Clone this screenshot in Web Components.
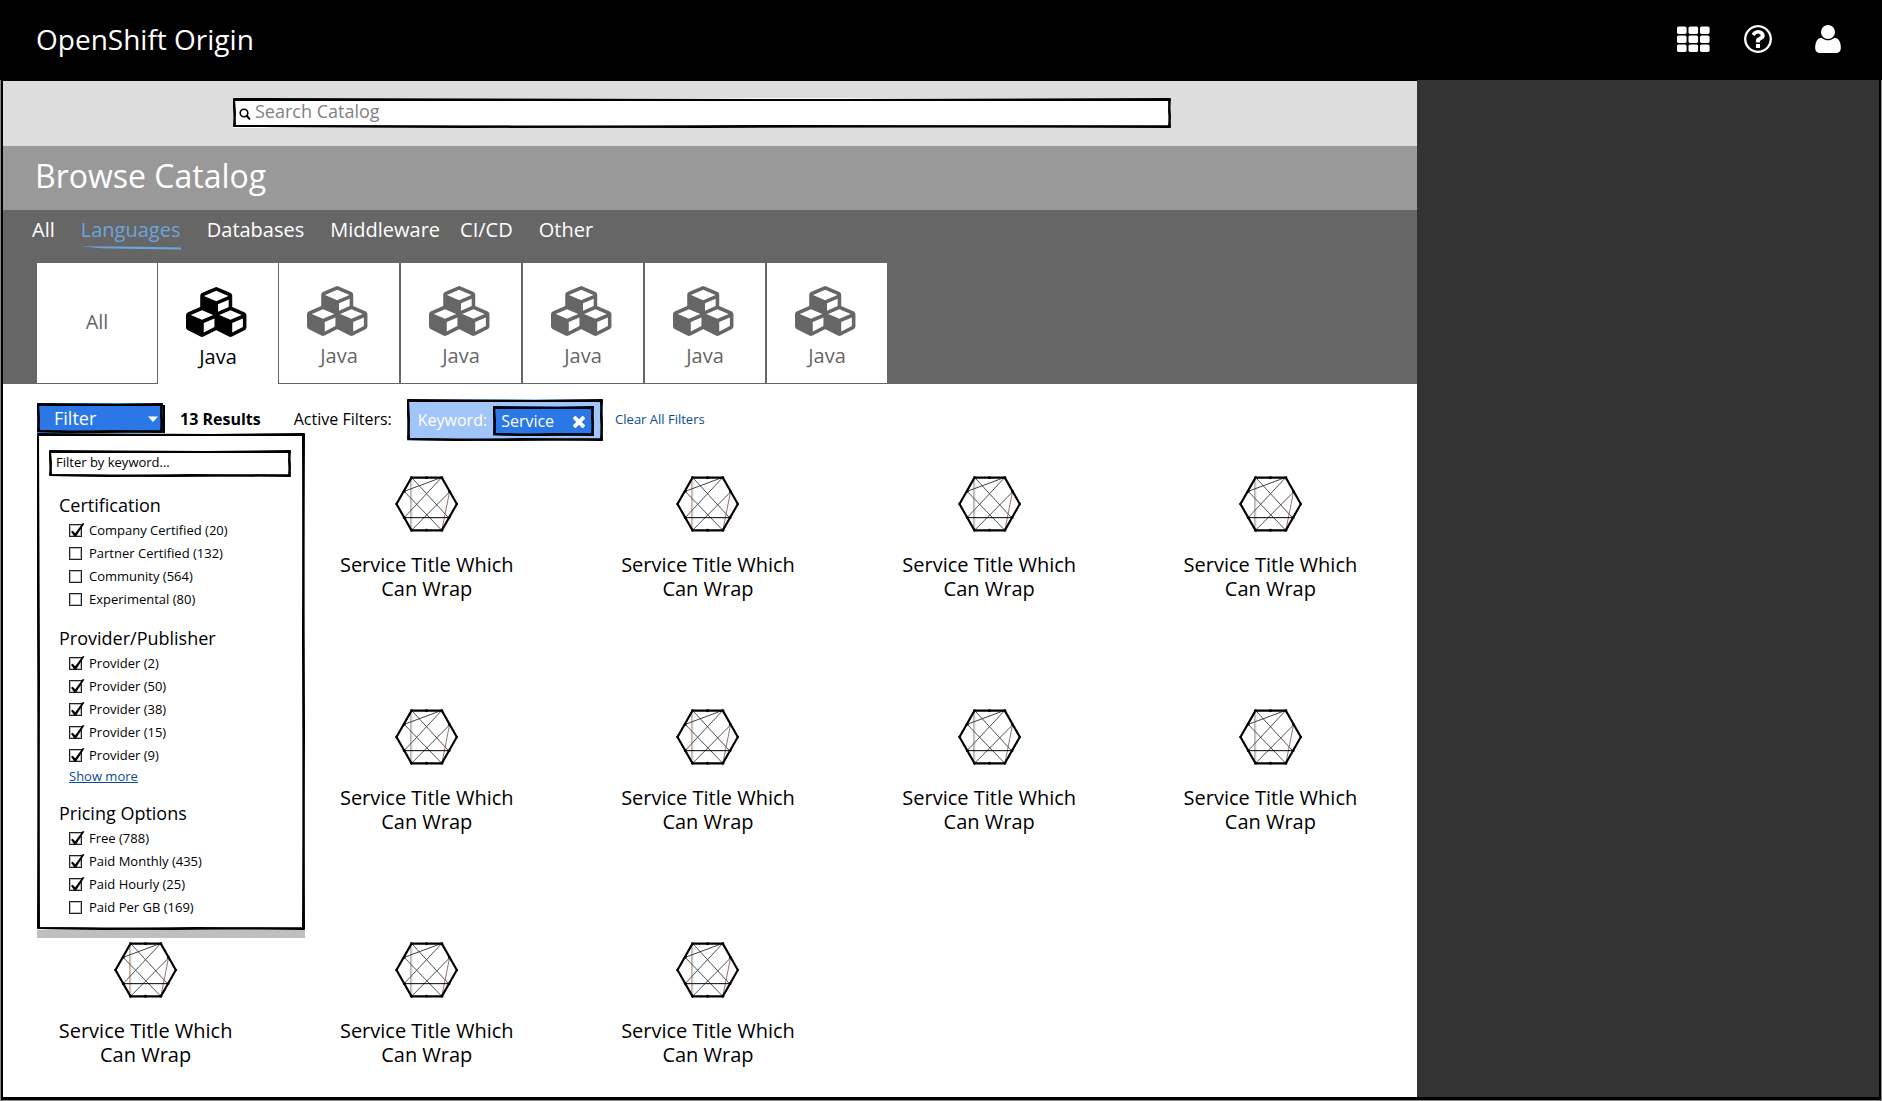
<!DOCTYPE html>
<html lang="en">
<head>
<meta charset="utf-8">
<title>OpenShift Origin</title>
<style>
html, body { margin: 0; min-height: 100vh; }
body { font-family: "Open Sans", "Noto Sans", sans-serif; color: #000; background: #fff; }
</style>
</head>
<body>
<catalog-app></catalog-app>

<script>
const define = (name, html, setup) => {
  const template = document.createElement('template');
  template.innerHTML = html;
  customElements.define(name, class extends HTMLElement {
    constructor() {
      super();
      this.attachShadow({ mode: 'open' }).append(template.content.cloneNode(true));
    }
    connectedCallback() { if (setup) setup(this, this.shadowRoot); }
  });
};

/* Icons share one glyph sheet: viewBox and drawing for each name. */
const up = d => `<path transform="scale(1,-1)" d="${d}"/>`;
const cell = [];
for (const y of [0.5, 9.5, 18.5]) for (const x of [0, 11.5, 23]) cell.push(`<rect x="${x}" y="${y}" width="9.6" height="7.4" rx="1.6"/>`);
const ICONS = {
  grid: ['0 0 33 26', cell.join('')],
  help: ['0 -1408 1536 1536', up('M880 336v-160q0 -14 -9 -23t-23 -9h-160q-14 0 -23 9t-9 23v160q0 14 9 23t23 9h160q14 0 23 -9t9 -23zM1136 832q0 -50 -15 -90t-45.5 -69t-52 -44t-59.5 -36q-32 -18 -46.5 -28t-26 -24t-11.5 -29v-32q0 -14 -9 -23t-23 -9h-160q-14 0 -23 9t-9 23v68q0 35 10.5 64.5t24 47.5t39 35.5t41 25.5t44.5 21q53 25 75 43t22 49q0 42 -43.5 71.5t-95.5 29.5q-56 0 -95 -27q-29 -20 -80 -83q-9 -12 -25 -12q-11 0 -19 6l-108 82q-10 7 -12 20t5 23q122 192 349 192q129 0 238.5 -89.5t109.5 -214.5zM768 1280q-130 0 -248.5 -51t-204 -136.5t-136.5 -204t-51 -248.5t51 -248.5t136.5 -204t204 -136.5t248.5 -51t248.5 51t204 136.5t136.5 204t51 248.5t-51 248.5t-136.5 204t-204 136.5t-248.5 51zM1536 640q0 -209 -103 -385.5t-279.5 -279.5t-385.5 -103t-385.5 103t-279.5 279.5t-103 385.5t103 385.5t279.5 279.5t385.5 103t385.5 -103t279.5 -279.5t103 -385.5z')],
  user: ['0 -1408 1408 1536', up('M1408 131q0 -120 -73 -189.5t-194 -69.5h-874q-121 0 -194 69.5t-73 189.5q0 53 3.5 103.5t14 109t26.5 108.5t43 97.5t62 81t85.5 53.5t111.5 20q9 0 42 -21.5t74.5 -48t108 -48t133.5 -21.5t133.5 21.5t108 48t74.5 48t42 21.5q61 0 111.5 -20t85.5 -53.5t62 -81t43 -97.5t26.5 -108.5t14 -109t3.5 -103.5zM1088 1024q0 -159 -112.5 -271.5t-271.5 -112.5t-271.5 112.5t-112.5 271.5t112.5 271.5t271.5 112.5t271.5 -112.5t112.5 -271.5z')],
  cubes: ['0 -1536 2304 1792', up('M640 -96l384 192v314l-384 -164v-342zM576 358l404 173l-404 173l-404 -173zM1664 -96l384 192v314l-384 -164v-342zM1600 358l404 173l-404 173l-404 -173zM1152 651l384 165v266l-384 -164v-267zM1088 1030l441 189l-441 189l-441 -189zM2176 512v-416q0 -36 -19 -67t-52 -47l-448 -224q-25 -14 -57 -14t-57 14l-448 224q-4 2 -7 4q-2 -2 -7 -4l-448 -224q-25 -14 -57 -14t-57 14l-448 224q-33 16 -52 47t-19 67v416q0 38 21.5 70t56.5 48l434 186v400q0 38 21.5 70t56.5 48l448 192q23 10 50 10t50 -10l448 -192q35 -16 56.5 -48t21.5 -70v-400l434 -186q36 -16 57 -48t21 -70z')],
  close: ['110 -1170 1188 1188', up('M1298 214q0 -40 -28 -68l-136 -136q-28 -28 -68 -28t-68 28l-294 294l-294 -294q-28 -28 -68 -28t-68 28l-136 136q-28 28 -28 68t28 68l294 294l-294 294q-28 28 -28 68t28 68l136 136q28 28 68 28t68 -28l294 -294l294 294q28 28 68 28t68 -28l136 -136q28 -28 28 -68t-28 -68l-294 -294l294 -294q28 -28 28 -68z')],
  search: ['0 0 12 12', '<circle cx="5" cy="5" r="3.8" fill="none" stroke="currentColor" stroke-width="1.6"/><path d="M8 8L10.4 10.8" fill="none" stroke="currentColor" stroke-width="2" stroke-linecap="round"/>'],
  caret: ['0 0 10 6', '<path d="M0 0.5h10L5 6z"/>'],
  mesh: ['-3 -4 188 168', `
    <g fill="none" stroke-width="3">
      <path stroke="#c98a55" d="M44 2V158"/><path stroke="#8fc0e6" stroke-width="2" d="M47 2V158"/>
      <path stroke="#444" stroke-width="2.8" d="M46 0L157 121M137 0L24 121M24 42L137 159M160 44L46 159"/>
      <path stroke="#333" stroke-width="2.8" d="M24 42L137 0"/>
      <path stroke="#8a6a5a" stroke-width="2.8" d="M160 44L137 159"/>
      <path stroke="#000" d="M24 121H157"/>
      <path stroke="#000" stroke-width="6.4" d="M46 1H137L182 80L137 159H46L1 80Z"/>
    </g>
    <circle cx="1" cy="80" r="3.8"/><circle cx="182" cy="80" r="3.8"/><circle cx="46" cy="1" r="4.4"/><circle cx="137" cy="1" r="4.4"/>
    <circle cx="46" cy="159" r="4.4"/><circle cx="137" cy="159" r="4.4"/><circle cx="91" cy="1" r="4.4"/><circle cx="91" cy="159" r="4.4"/>
    <circle cx="24" cy="42" r="4"/><circle cx="24" cy="121" r="4"/><circle cx="160" cy="43" r="4"/><circle cx="159" cy="121" r="4"/>`]
};
define('app-icon', `
<style>
:host { display: block; flex: none; }
svg { display: block; width: 100%; height: 100%; fill: currentColor; }
</style>
<svg aria-hidden="true"></svg>`, (el, root) => {
  const [box, art] = ICONS[el.getAttribute('name')];
  const svg = root.querySelector('svg');
  svg.setAttribute('viewBox', box);
  svg.innerHTML = art;
});

/* A box with a hand-drawn outline that follows its own size. */
define('sketch-frame', `
<style>
:host { display: block; position: relative; box-sizing: border-box; }
svg { position: absolute; inset: 0; width: 100%; height: 100%; overflow: visible; pointer-events: none; }
path { fill: none; stroke: #000; stroke-width: 2; stroke-linejoin: round; }
</style>
<slot></slot>
<svg aria-hidden="true"><path/><path/></svg>`, (el, root) => {
  const [first, second] = root.querySelectorAll('path');
  const draw = () => {
    const w = el.offsetWidth, h = el.offsetHeight;
    first.setAttribute('d', `M1 1L${w * .3} 1.5L${w * .65} 2L${w - 1} 1L${w - 2} ${h * .4}L${w - 1} ${h - 1}L${w * .6} ${h - 2}L${w * .25} ${h - 1}L1 ${h - 2}L2 ${h * .5}Z`);
    second.setAttribute('d', `M1 2L${w * .45} 2L${w - 2} 2L${w - 1} ${h * .6}L${w - 2} ${h - 2}L${w * .5} ${h - 1}L2 ${h - 2}L1 ${h * .3}Z`);
  };
  new ResizeObserver(draw).observe(el);
  draw();
});

define('app-header', `
<style>
:host { display: flex; align-items: center; justify-content: space-between; height: 78px; padding: 0 41px 2px 36px; background: #000; color: #fff; }
h1 { margin: 0; font-size: 28px; line-height: 38px; font-weight: 400; }
nav { display: flex; align-items: center; }
button { display: block; padding: 0; border: 0; background: none; color: inherit; }
.grid { width: 33px; height: 26px; margin-right: 34px; }
.help { width: 28px; height: 28px; margin-right: 43px; }
.user { width: 26px; height: 28px; }
</style>
<h1>OpenShift Origin</h1>
<nav aria-label="Account">
  <button aria-label="Applications"><app-icon class="grid" name="grid"></app-icon></button>
  <button aria-label="Help"><app-icon class="help" name="help"></app-icon></button>
  <button aria-label="User"><app-icon class="user" name="user"></app-icon></button>
</nav>`);

define('catalog-search', `
<style>
:host { display: block; padding: 17px 246px 18px 230px; background: #ddd; }
sketch-frame { display: flex; align-items: center; gap: 4px; height: 30px; padding: 0 8px 0 6px; background: #fff; }
app-icon { width: 12px; height: 12px; margin-top: 2px; }
input { flex: 1; min-width: 0; height: 26px; padding: 0 0 4px; border: 0; outline: 0; background: none; box-sizing: border-box; font: 18px "Open Sans", sans-serif; }
input::placeholder { color: #7f7f88; opacity: 1; }
</style>
<sketch-frame><app-icon name="search"></app-icon><input type="search" placeholder="Search Catalog" aria-label="Search Catalog"></sketch-frame>`);

define('category-link', `
<style>
:host { display: block; }
a { display: block; color: #fff; text-decoration: none; font-size: 20px; line-height: 24px; padding-bottom: 8px; }
svg { display: none; width: 100%; height: 4px; }
:host([current]) a { color: #6ca5dc; padding-bottom: 4px; }
:host([current]) svg { display: block; }
</style>
<a href="#"><slot></slot></a>
<svg viewBox="0 0 100 4" preserveAspectRatio="none" aria-hidden="true"><path d="M0 .3L60 .8L100 1.6L100 3.4L60 3L20 2.2Z" fill="#6ca5dc"/></svg>`);

define('language-tile', `
<style>
:host { display: block; width: 120px; height: 120px; }
button { display: flex; flex-direction: column; align-items: center; justify-content: center; gap: 8px; width: 100%; height: 100%; padding: 0 0 2px; border: 0; background: #fff; color: #666; font: 20px/24px "Open Sans", sans-serif; }
:host([current]) button { color: #000; }
app-icon { width: 64px; height: 50px; margin-top: 10px; }
</style>
<button><slot></slot></button>`, (el, root) => {
  if (el.hasAttribute('icon') && !root.querySelector('app-icon')) {
    const icon = document.createElement('app-icon');
    icon.setAttribute('name', el.getAttribute('icon'));
    root.querySelector('button').prepend(icon);
  }
});

define('catalog-nav', `
<style>
:host { display: block; background: #666; }
h2 { margin: 0; padding: 9px 32px 13px; background: #999; color: #fff; font-size: 32px; line-height: 42px; font-weight: 400; }
nav { display: flex; gap: 26px; padding: 8px 29px 13px; }
nav .wide { margin-left: -6px; }
.tiles { display: flex; padding: 0 34px; gap: 2px; border-bottom: 1px solid #666; }
.joined { margin-right: -1px; }
.open { height: 121px; margin-right: -1px; margin-bottom: -1px; }
</style>
<h2>Browse Catalog</h2>
<nav aria-label="Categories">
  <category-link>All</category-link>
  <category-link current>Languages</category-link>
  <category-link>Databases</category-link>
  <category-link>Middleware</category-link>
  <category-link class="wide">CI/CD</category-link>
  <category-link>Other</category-link>
</nav>
<div class="tiles">
  <language-tile class="joined">All</language-tile>
  <language-tile class="open" icon="cubes" current>Java</language-tile>
  <language-tile icon="cubes">Java</language-tile>
  <language-tile icon="cubes">Java</language-tile>
  <language-tile icon="cubes">Java</language-tile>
  <language-tile icon="cubes">Java</language-tile>
  <language-tile icon="cubes">Java</language-tile>
</div>`);

define('filter-option', `
<style>
:host { display: block; }
label { display: flex; align-items: center; gap: 7px; height: 23px; font-size: 13px; line-height: 18px; }
span { padding-bottom: 2px; }
input { appearance: none; position: relative; flex: none; width: 13px; height: 13px; margin: 0; border: 1px solid #222; box-shadow: inset 0 0 0 1px #bbb; background: #fff; }
input:checked::after { content: ""; position: absolute; left: 1px; top: -2px; width: 14px; height: 14px; background: #000; clip-path: polygon(0 62%, 12% 55%, 30% 74%, 84% 0, 96% 4%, 36% 96%, 24% 96%); }
</style>
<label><input type="checkbox"><span><slot></slot></span></label>`, (el, root) => {
  root.querySelector('input').checked = el.hasAttribute('checked');
});

define('filter-group', `
<style>
:host { display: block; }
fieldset { margin: 0; padding: 0; border: 0; min-width: 0; }
legend { padding: 0 0 2px; font-size: 18px; line-height: 24px; }
.options { padding-left: 10px; }
</style>
<fieldset><legend></legend><div class="options"><slot></slot></div></fieldset>`, (el, root) => {
  root.querySelector('legend').textContent = el.getAttribute('heading');
});

define('filter-menu', `
<style>
:host { display: block; position: relative; width: 127px; height: 34px; }
button { display: block; width: 100%; padding: 0; border: 0; background: none; color: #fff; font: 18px/24px "Open Sans", sans-serif; text-align: left; }
.trigger { display: flex; align-items: center; justify-content: space-between; width: 126px; height: 30px; padding: 0 5px 1px 17px; background: #2b77e5; box-shadow: 2px 2px 0 #000; }
.trigger app-icon { width: 10px; height: 6px; margin-top: 3px; }
.panel { position: absolute; z-index: 2; top: 30px; left: 0; width: 268px; padding: 17px 14px 11px 12px; background: #fff; box-shadow: 0 8px 0 #bfbfbf; }
.keyword { height: 27px; padding: 2px 3px; margin-bottom: 16px; }
input { display: block; width: 100%; height: 22px; padding: 0 4px 3px; border: 0; outline: 0; background: none; box-sizing: border-box; font: 13px "Open Sans", sans-serif; }
input::placeholder { color: #000; opacity: 1; }
.groups { display: flex; flex-direction: column; gap: 15px; padding-left: 10px; }
a { display: block; width: max-content; color: #0a4b92; font-size: 13px; line-height: 19px; }
</style>
<button aria-expanded="true"><sketch-frame class="trigger">Filter<app-icon name="caret"></app-icon></sketch-frame></button>
<sketch-frame class="panel">
  <sketch-frame class="keyword"><input type="text" placeholder="Filter by keyword..." aria-label="Filter by keyword"></sketch-frame>
  <div class="groups">
    <filter-group heading="Certification">
      <filter-option checked>Company Certified (20)</filter-option>
      <filter-option>Partner Certified (132)</filter-option>
      <filter-option>Community (564)</filter-option>
      <filter-option>Experimental (80)</filter-option>
    </filter-group>
    <filter-group heading="Provider/Publisher">
      <filter-option checked>Provider (2)</filter-option>
      <filter-option checked>Provider (50)</filter-option>
      <filter-option checked>Provider (38)</filter-option>
      <filter-option checked>Provider (15)</filter-option>
      <filter-option checked>Provider (9)</filter-option>
      <a href="#">Show more</a>
    </filter-group>
    <filter-group heading="Pricing Options">
      <filter-option checked>Free (788)</filter-option>
      <filter-option checked>Paid Monthly (435)</filter-option>
      <filter-option checked>Paid Hourly (25)</filter-option>
      <filter-option>Paid Per GB (169)</filter-option>
    </filter-group>
  </div>
</sketch-frame>`);

define('results-bar', `
<style>
:host { display: flex; align-items: center; gap: 16px; padding: 15px 34px 0; font-size: 16px; line-height: 22px; }
.count { margin-right: 17px; }
.count, .label, a { padding-bottom: 2px; }
.filters { display: flex; align-items: center; gap: 6px; height: 42px; padding: 0 9px 0 11px; margin-left: -1px; background: #a1c5f9; color: #fff; }
.chip { display: flex; align-items: center; gap: 19px; height: 30px; padding: 0 9px 0 8px; margin-top: 1px; background: #2b77e5; }
button { padding: 0; border: 0; background: none; color: inherit; }
.chip app-icon { width: 12px; height: 12px; margin-top: 3px; }
a { color: #0a4b92; font-size: 13px; line-height: 18px; text-decoration: none; margin-left: -4px; }
</style>
<filter-menu></filter-menu>
<strong class="count">13 Results</strong>
<span class="label">Active Filters:</span>
<sketch-frame class="filters">
  <span>Keyword:</span>
  <sketch-frame class="chip"><span>Service</span><button aria-label="Remove filter"><app-icon name="close"></app-icon></button></sketch-frame>
</sketch-frame>
<a href="#">Clear All Filters</a>`);

define('service-card', `
<style>
:host { display: flex; flex-direction: column; align-items: center; gap: 21px; }
app-icon { width: 63px; height: 56px; }
h3 { margin: 0; max-width: 200px; font-size: 20px; line-height: 24px; font-weight: 400; text-align: center; }
</style>
<app-icon name="mesh"></app-icon>
<h3><slot></slot></h3>`);

define('service-grid', `
<style>
:host { display: block; }
.cards { display: grid; grid-template-columns: repeat(5, minmax(0, 1fr)); row-gap: 108px; padding: 35px 6px 24px 2px; }
.second { grid-column: 2; }
</style>
<div class="cards"></div>`, (el, root) => {
  const cards = root.querySelector('.cards');
  for (let i = 0; i < 11; i++) {
    const card = document.createElement('service-card');
    card.textContent = 'Service Title Which Can Wrap';
    /* the open filter menu takes the first column of the first two rows */
    if (i === 0 || i === 4) card.className = 'second';
    cards.append(card);
  }
});

define('catalog-app', `
<style>
:host { display: flex; flex-direction: column; min-height: 100vh; background: #888; }
.shell { flex: 1; display: grid; grid-template-columns: minmax(0, 1fr) 462px; margin: 0 1px 1px; border: solid #000; border-width: 0 2px 3px; background: #333; }
main { background: #fff; border-top: 1px solid #000; }
</style>
<app-header></app-header>
<div class="shell">
  <main>
    <catalog-search></catalog-search>
    <catalog-nav></catalog-nav>
    <results-bar></results-bar>
    <service-grid></service-grid>
  </main>
  <aside aria-label="Details"></aside>
</div>`);
</script>
</body>
</html>
